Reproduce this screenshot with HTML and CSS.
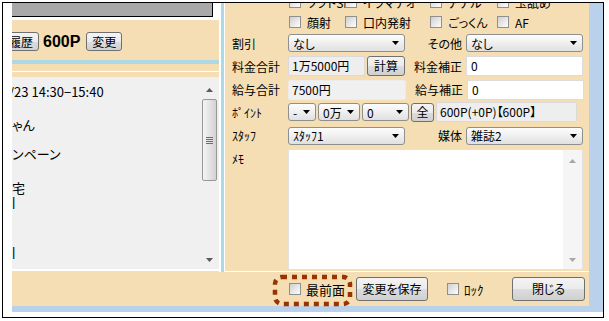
FILE: index.html
```html
<!DOCTYPE html>
<html lang="ja">
<head>
  <meta charset="UTF-8">
  <title>予約詳細</title>
  <link rel="stylesheet" href="styles.css">
</head>
<body>
  <div class="frame">
    <div class="win-main">
      <div class="client">
        <div class="panes">

          <div class="left-pane">
            <div class="field-wrap"><div class="gray-field"></div></div>
            <div class="history-bar">
              <button class="btn btn-history">履歴</button>
              <span class="points">600P</span>
              <button class="btn btn-change">変更</button>
            </div>
            <div class="blue-rule"></div>
            <div class="tan-gap"></div>
            <div class="list-wrap">
              <div class="list">
                <div class="list-text">
                  <div class="ln l1"><span class="cut">/</span>23 14:30−15:40</div>
                  <div class="ln l2">ゃん</div>
                  <div class="ln l3">ンペーン</div>
                  <div class="ln l4">宅</div>
                  <div class="ln l5"><span class="bar">|</span></div>
                  <div class="ln l6"><span class="bar">|</span></div>
                </div>
                <div class="vscroll">
                  <div class="sb-btn sb-up"><svg width="7" height="4"><polygon points="0,4 7,4 3.5,0"/></svg></div>
                  <div class="thumb"><span class="grip"></span></div>
                  <div class="sb-space"></div>
                  <div class="sb-btn sb-down"><svg width="7" height="4"><polygon points="0,0 7,0 3.5,4"/></svg></div>
                </div>
              </div>
            </div>
          </div>

          <div class="splitter"></div>

          <div class="right-pane">
            <div class="form">
              <div class="row row-a checks">
                <label class="chk c1"><span class="box"></span>ソフトSM</label>
                <label class="chk c2"><span class="box"></span>イラマチオ</label>
                <label class="chk c3"><span class="box"></span>アナル</label>
                <label class="chk c4"><span class="box"></span>玉舐め</label>
              </div>
              <div class="row row-b checks">
                <label class="chk c1"><span class="box"></span>顔射</label>
                <label class="chk c2"><span class="box"></span>口内発射</label>
                <label class="chk c3"><span class="box"></span>ごっくん</label>
                <label class="chk c4"><span class="box"></span>AF</label>
              </div>
              <div class="row row-c">
                <span class="lbl">割引</span>
                <div class="combo w-left"><span>なし</span><svg width="7" height="4"><polygon points="0,0 7,0 3.5,4"/></svg></div>
                <span class="lbl-r">その他</span>
                <div class="combo w-right"><span>なし</span><svg width="7" height="4"><polygon points="0,0 7,0 3.5,4"/></svg></div>
              </div>
              <div class="row row-d">
                <span class="lbl">料金合計</span>
                <div class="group">
                  <div class="ro-box w-total">1万5000円</div>
                  <button class="btn btn-calc">計算</button>
                </div>
                <span class="lbl-r">料金補正</span>
                <div class="txt w-right">0</div>
              </div>
              <div class="row row-e">
                <span class="lbl">給与合計</span>
                <div class="ro-box w-left">7500円</div>
                <span class="lbl-r">給与補正</span>
                <div class="txt w-right">0</div>
              </div>
              <div class="row row-f">
                <span class="lbl">ﾎﾟｲﾝﾄ</span>
                <div class="group">
                  <div class="combo w-sign"><span>-</span><svg width="7" height="4"><polygon points="0,0 7,0 3.5,4"/></svg></div>
                  <div class="combo w-man"><span>0万</span><svg width="7" height="4"><polygon points="0,0 7,0 3.5,4"/></svg></div>
                  <div class="combo w-num"><span>0</span><svg width="7" height="4"><polygon points="0,0 7,0 3.5,4"/></svg></div>
                  <button class="btn btn-all">全</button>
                  <div class="ro-box w-point">600P(+0P)【600P】</div>
                </div>
              </div>
              <div class="row row-g">
                <span class="lbl">ｽﾀｯﾌ</span>
                <div class="combo w-left"><span>ｽﾀｯﾌ1</span><svg width="7" height="4"><polygon points="0,0 7,0 3.5,4"/></svg></div>
                <span class="lbl-r">媒体</span>
                <div class="combo w-right"><span>雑誌2</span><svg width="7" height="4"><polygon points="0,0 7,0 3.5,4"/></svg></div>
              </div>
              <div class="memo-row">
                <span class="lbl">ﾒﾓ</span>
                <div class="memo">
                  <div class="memo-text"></div>
                  <div class="memo-scroll">
                    <svg width="7" height="4"><polygon points="0,4 7,4 3.5,0"/></svg>
                    <svg width="7" height="4"><polygon points="0,0 7,0 3.5,4"/></svg>
                  </div>
                </div>
              </div>
            </div>
          </div>

        </div>

        <div class="bottom-bar">
          <label class="chk chk-top"><span class="box"></span>最前面</label>
          <button class="btn btn-save">変更を保存</button>
          <label class="chk chk-lock"><span class="box"></span>ﾛｯｸ</label>
          <button class="btn btn-close">閉じる</button>
          <svg class="spot" width="82" height="34">
            <rect x="3" y="3" width="75" height="27" rx="7" ry="7"/>
          </svg>
        </div>
      </div>
      <div class="edge-right"></div>
    </div>
    <div class="edge-bottom"></div>
  </div>
</body>
</html>
```

FILE: styles.css
```css
* {
  box-sizing: border-box;
}
body {
  margin: 0;
  background: #fff;
  color: #000;
  font-family: "Noto Sans CJK JP", sans-serif;
  font-size: 12px;
  font-feature-settings: "palt";
}
button {
  font: inherit;
  color: inherit;
  padding: 0;
}

/* outer highlight frame + window */
.frame {
  width: 602px;
  height: 316px;
  margin: 2px 0 0 2px;
  padding-left: 9px;
  border: 1px solid #000;
  display: flex;
  flex-direction: column;
}
.win-main {
  display: flex;
  height: 303px;
}
.client {
  width: 577px;
  display: flex;
  flex-direction: column;
}
.edge-right {
  flex: 1;
  background: #b9d1ea;
}
.edge-bottom {
  height: 6px;
  background: #b9d1ea;
}

.panes {
  display: flex;
  height: 269px;
}

/* left pane */
.left-pane {
  width: 207px;
  display: flex;
  flex-direction: column;
  background: #f5deb3;
  overflow: hidden;
}
.field-wrap {
  height: 17px;
  padding: 0 6px 3px 0;
  background: #fff;
}
.gray-field {
  height: 14px;
  background: #a9a9a9;
  border-right: 1px solid #000;
  border-bottom: 1px solid #000;
}
.history-bar {
  height: 40px;
  padding-top: 12px;
  display: flex;
  align-items: flex-start;
}
.btn-history {
  width: 36px;
  height: 19px;
  margin-left: -9px;
}
.points {
  margin: 0 6px 0 4px;
  font-family: "Liberation Sans", sans-serif;
  font-weight: bold;
  font-size: 16px;
  line-height: 19px;
}
.btn-change {
  width: 36px;
  height: 19px;
}
.blue-rule {
  height: 4px;
  background: #add8e6;
}
.tan-gap {
  height: 8px;
  border-bottom: 1px solid #fff;
}
.list-wrap {
  height: 200px;
  padding-top: 5px;
}
.list {
  height: 194px;
  display: flex;
  background: #f0f0f0;
  border-bottom: 2px solid #fff;
}
.list-text {
  flex: 1;
  overflow: hidden;
  padding-top: 8px;
  font-size: 13px;
}
.ln {
  height: 13px;
  line-height: 13px;
  white-space: nowrap;
}
.cut {
  margin-left: -3px;
}
.bar {
  font-family: "Liberation Sans", sans-serif;
}
.l2 { margin-top: 20px; }
.l3 { margin-top: 16px; }
.l4 { margin-top: 21px; }
.l6 { margin-top: 37px; }

.vscroll {
  width: 18px;
  margin-right: 1px;
  display: flex;
  flex-direction: column;
  align-items: center;
}
.sb-btn {
  display: flex;
  justify-content: center;
}
.sb-btn svg {
  fill: #5a5a5a;
}
.sb-up {
  height: 22px;
  padding-top: 11px;
}
.sb-down {
  height: 17px;
  padding-top: 6px;
}
.thumb {
  width: 15px;
  height: 82px;
  border: 1px solid #979797;
  border-radius: 2px;
  background: linear-gradient(to right, #f4f4f4, #e4e4e4 50%, #d2d2d2);
  display: flex;
  align-items: center;
  justify-content: center;
}
.grip {
  width: 7px;
  height: 7px;
  background: repeating-linear-gradient(#6d6d6d 0 1px, transparent 1px 2px);
}
.sb-space {
  flex: 1;
}

.splitter {
  width: 6px;
  background: linear-gradient(to right, #fff 2px, #add8e6 2px, #add8e6 5px, #fff 5px);
}

/* right pane form */
.right-pane {
  width: 364px;
  padding: 0 6px 0 7px;
  background: #f5deb3;
  border-bottom: 1px solid #fff;
  overflow: hidden;
}
.form {
  margin-top: -11px;
}
.row {
  display: flex;
  align-items: center;
}
.row-a { height: 20px; }
.row-b { height: 20px; }
.row-c { height: 22px; }
.row-d { height: 24px; }
.row-e { height: 23px; }
.row-f { height: 22px; }
.row-g { height: 25px; }

.checks {
  padding-left: 57px;
}
.chk {
  display: flex;
  align-items: center;
  white-space: nowrap;
}
.box {
  width: 12px;
  height: 12px;
  margin-right: 6px;
  flex: none;
  border: 1px solid #8f8f8f;
  background: linear-gradient(135deg, #cfcfcf, #f0f0f0 70%, #fbfbfb);
}
.c1 { width: 56px; }
.c2 { width: 85px; }
.c3 { width: 67px; }

.lbl {
  width: 56px;
  flex: none;
}
.lbl-r {
  width: 57px;
  margin-right: 4px;
  text-align: right;
  flex: none;
}
.group {
  display: flex;
  align-items: center;
  gap: 2px;
}
.w-left { width: 117px; }
.w-right { width: 117px; }
.w-total { width: 77px; }
.w-sign { width: 28px; }
.w-man { width: 42px; }
.w-num { width: 47px; }
.w-point { width: 141px; }

.btn {
  border: 1px solid #707070;
  border-radius: 3px;
  background: linear-gradient(#f3f3f3, #ebebeb 50%, #dddddd 50%, #d0d0d0);
  line-height: 16px;
}
.btn-calc {
  width: 38px;
  height: 20px;
}
.btn-all {
  width: 23px;
  height: 19px;
}

.combo {
  height: 18px;
  flex: none;
  display: flex;
  align-items: center;
  justify-content: space-between;
  padding: 0 5px 0 4px;
  border: 1px solid #8e8f8f;
  border-radius: 3px;
  background: linear-gradient(#fdfdfd, #efefef 50%, #e0e0e0);
  white-space: nowrap;
}
.combo svg {
  fill: #000;
  flex: none;
}
.ro-box {
  height: 20px;
  flex: none;
  padding-left: 3px;
  line-height: 18px;
  border: 1px solid #dadada;
  border-radius: 2px;
  background: #eeeeee;
  white-space: nowrap;
}
.row-e .ro-box {
  width: 118px;
  border-color: #ececec;
  background: #f0f0f0;
}
.txt {
  height: 20px;
  flex: none;
  padding-left: 4px;
  line-height: 18px;
  border: 1px solid #dcdcdc;
  background: #fff;
}

.memo-row {
  display: flex;
  margin-top: 1px;
}
.memo-row .lbl {
  padding-top: 1px;
}
.memo {
  width: 296px;
  height: 121px;
  display: flex;
  border: 1px solid #e2e2e2;
  background: #fff;
}
.memo-text {
  flex: 1;
}
.memo-scroll {
  width: 19px;
  padding: 9px 0 7px;
  display: flex;
  flex-direction: column;
  align-items: center;
  justify-content: space-between;
  background: #f5f5f5;
}
.memo-scroll svg {
  fill: #a7a7a7;
}

/* bottom button bar */
.bottom-bar {
  position: relative;
  height: 34px;
  display: flex;
  align-items: center;
  justify-content: flex-end;
  padding-right: 4px;
  background: #f5deb3;
}
.chk-top {
  width: 67px;
  font-size: 13px;
}
.chk-top .box {
  margin-right: 5px;
}
.btn-save {
  width: 72px;
  height: 24px;
  margin-right: 19px;
}
.chk-lock {
  width: 65px;
  font-size: 13px;
}
.chk-lock .box {
  margin-right: 5px;
}
.btn-close {
  width: 73px;
  height: 24px;
}
.spot {
  position: absolute;
  left: 260px;
  top: 2px;
  overflow: visible;
}
.spot rect {
  fill: none;
  stroke: #993300;
  stroke-width: 4.5;
  stroke-dasharray: 5 5;
}
```
